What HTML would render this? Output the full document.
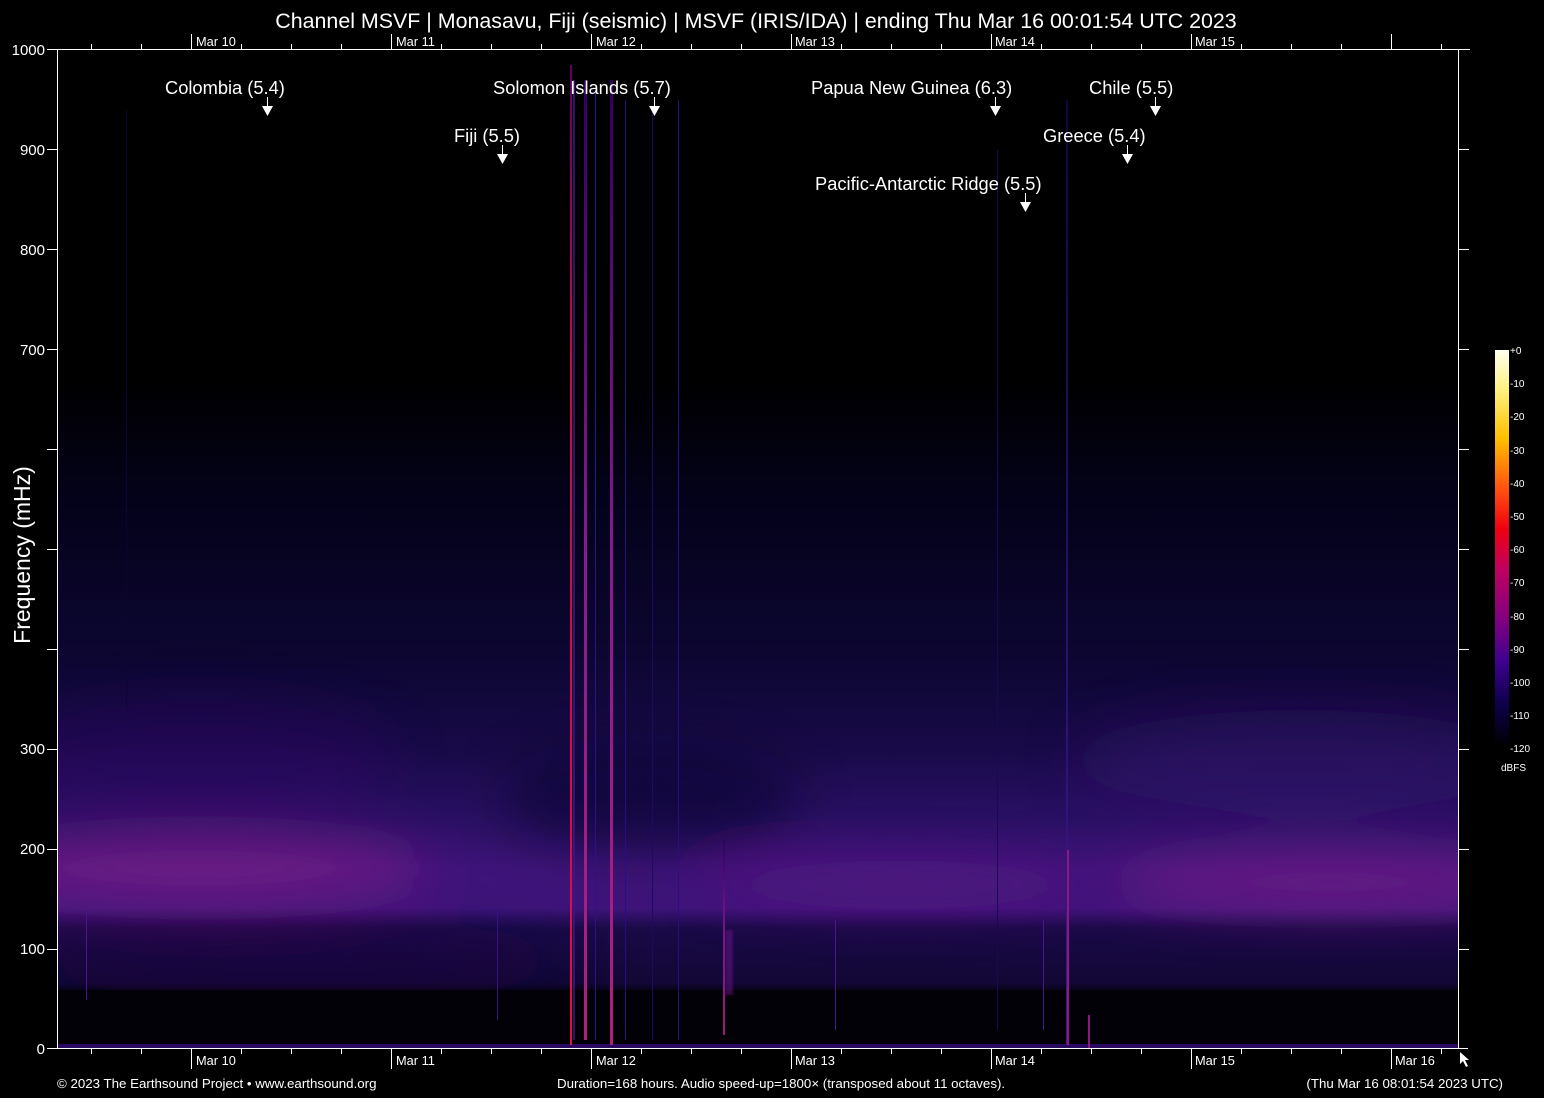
<!DOCTYPE html>
<html><head><meta charset="utf-8"><style>
html,body{margin:0;padding:0;background:#000;width:1544px;height:1098px;overflow:hidden}
svg{display:block}
text{font-family:"Liberation Sans",Arial,sans-serif;fill:#fff}
</style></head><body>
<svg width="1544" height="1098" viewBox="0 0 1544 1098" xmlns="http://www.w3.org/2000/svg">
<defs>
<linearGradient id="bg" x1="0" y1="0" x2="0" y2="1" gradientUnits="objectBoundingBox">
<stop offset="0" stop-color="#000"/>
<stop offset="0.33" stop-color="#000"/>
<stop offset="0.45" stop-color="#04021a"/>
<stop offset="0.6" stop-color="#0c0630"/>
<stop offset="0.7" stop-color="#180a48"/>
<stop offset="0.77" stop-color="#2a1064"/>
<stop offset="0.82" stop-color="#3e147a"/>
<stop offset="0.86" stop-color="#3e147a"/>
<stop offset="0.88" stop-color="#1a0a48"/>
<stop offset="0.935" stop-color="#120735"/>
<stop offset="0.945" stop-color="#04020c"/>
<stop offset="1" stop-color="#020108"/>
</linearGradient>
<clipPath id="pc"><rect x="58" y="50" width="1400" height="998"/></clipPath>
<filter id="bl" x="-50%" y="-50%" width="200%" height="200%"><feGaussianBlur stdDeviation="25"/></filter>
<filter id="bl2" x="-50%" y="-50%" width="200%" height="200%"><feGaussianBlur stdDeviation="1"/></filter>
<linearGradient id="red" x1="0" y1="0" x2="0" y2="1">
<stop offset="0" stop-color="#600060"/><stop offset="0.3" stop-color="#c0104a"/><stop offset="1" stop-color="#e01040"/></linearGradient>
<linearGradient id="mag" x1="0" y1="0" x2="0" y2="1">
<stop offset="0" stop-color="#300060"/><stop offset="0.5" stop-color="#8a1a90"/><stop offset="1" stop-color="#b0207a"/></linearGradient>
<linearGradient id="blu" x1="0" y1="0" x2="0" y2="1">
<stop offset="0" stop-color="#10083a"/><stop offset="1" stop-color="#3a1890"/></linearGradient>
<linearGradient id="cb" x1="0" y1="0" x2="0" y2="1">
<stop offset="0" stop-color="#fffff0"/><stop offset="0.1" stop-color="#fff080"/><stop offset="0.22" stop-color="#ffc000"/><stop offset="0.35" stop-color="#ff5010"/><stop offset="0.45" stop-color="#f00010"/><stop offset="0.55" stop-color="#c00060"/><stop offset="0.68" stop-color="#800080"/><stop offset="0.78" stop-color="#400090"/><stop offset="0.88" stop-color="#100050"/><stop offset="1" stop-color="#000"/></linearGradient>
<pattern id="tk" x="91" y="0" width="50" height="2000" patternUnits="userSpaceOnUse"><rect x="0" y="0" width="1" height="2000" fill="#fff"/></pattern>
<pattern id="tkd" x="191" y="0" width="200" height="2000" patternUnits="userSpaceOnUse"><rect x="0" y="0" width="1" height="2000" fill="#fff"/></pattern>
<pattern id="yt" x="0" y="49" width="20" height="100" patternUnits="userSpaceOnUse"><rect x="0" y="0" width="20" height="1" fill="#fff"/></pattern>
</defs>
<!-- plot -->
<rect x="58" y="50" width="1400" height="998" fill="url(#bg)"/>
<g clip-path="url(#pc)">
<g filter="url(#bl)">
<ellipse cx="200" cy="868" rx="230" ry="35" fill="#9a1f90" opacity="0.5"/>
<ellipse cx="1330" cy="882" rx="220" ry="30" fill="#9a1f90" opacity="0.45"/>
<ellipse cx="900" cy="885" rx="200" ry="25" fill="#7a1a8a" opacity="0.3"/>
<ellipse cx="1300" cy="760" rx="230" ry="50" fill="#4a1688" opacity="0.3"/>
<ellipse cx="200" cy="760" rx="200" ry="60" fill="#3a1278" opacity="0.25"/>
<ellipse cx="650" cy="800" rx="150" ry="50" fill="#0a0425" opacity="0.5"/>
<ellipse cx="300" cy="960" rx="260" ry="22" fill="#1a0a45" opacity="0.6"/>
</g>
</g>
<rect x="58" y="990" width="1400" height="58" fill="#030108"/>
<rect x="58" y="1044" width="1400" height="4" fill="#2a0a60"/>
<!-- quake lines -->
<rect x="570" y="65" width="2" height="980" fill="url(#red)"/>
<rect x="573" y="80" width="2" height="960" fill="#40148a" opacity="0.8"/>
<rect x="584" y="80" width="3" height="960" fill="url(#mag)"/>
<rect x="595" y="90" width="1" height="950" fill="#30108a"/>
<rect x="610" y="80" width="3" height="965" fill="url(#mag)"/>
<rect x="625" y="100" width="1" height="940" fill="#2a0e80"/>
<rect x="652" y="110" width="1" height="930" fill="#1e0a60"/>
<rect x="678" y="100" width="1" height="940" fill="#2a0e80"/>
<rect x="723" y="840" width="2" height="195" fill="url(#mag)" opacity="0.9"/>
<rect x="725" y="930" width="8" height="65" fill="#6a1888" opacity="0.5" filter="url(#bl2)"/>
<rect x="1066" y="100" width="2" height="945" fill="url(#blu)"/>
<rect x="1067" y="850" width="2" height="195" fill="#8a1a80"/>
<rect x="1043" y="920" width="1" height="110" fill="#4a1690"/>
<rect x="835" y="920" width="1" height="110" fill="#4a1690"/>
<rect x="997" y="150" width="1" height="880" fill="#180a50"/>
<rect x="1088" y="1015" width="2" height="33" fill="#8a1a80"/>
<rect x="86" y="910" width="1" height="90" fill="#4a1690"/>
<rect x="126" y="110" width="1" height="600" fill="#0a0630"/>
<rect x="497" y="900" width="1" height="120" fill="#3a1280"/>
<!-- axes -->
<rect x="57" y="49" width="1" height="1000" fill="#fff"/>
<rect x="1458" y="49" width="1" height="1000" fill="#fff"/>
<rect x="57" y="49" width="1413" height="1" fill="#fff"/>
<rect x="47" y="1048" width="1421" height="1" fill="#fff"/>
<rect x="47" y="49" width="10" height="1000" fill="url(#yt)"/>
<rect x="1459" y="49" width="10" height="1000" fill="url(#yt)"/>
<rect x="58" y="44" width="1400" height="5" fill="url(#tk)"/>
<rect x="58" y="34" width="1400" height="15" fill="url(#tkd)"/>
<rect x="58" y="1049" width="1400" height="5" fill="url(#tk)"/>
<rect x="58" y="1049" width="1400" height="20" fill="url(#tkd)"/>
<!-- labels -->
<text x="756" y="28" font-size="21.4" text-anchor="middle">Channel MSVF | Monasavu, Fiji (seismic) | MSVF (IRIS/IDA) | ending Thu Mar 16 00:01:54 UTC 2023</text>
<g font-size="12.8">
<text x="196" y="46">Mar 10</text><text x="396" y="46">Mar 11</text><text x="596" y="46">Mar 12</text><text x="795" y="46">Mar 13</text><text x="995" y="46">Mar 14</text><text x="1195" y="46">Mar 15</text>
<text x="196" y="1065">Mar 10</text><text x="396" y="1065">Mar 11</text><text x="596" y="1065">Mar 12</text><text x="795" y="1065">Mar 13</text><text x="995" y="1065">Mar 14</text><text x="1195" y="1065">Mar 15</text><text x="1395" y="1065">Mar 16</text>
</g>
<g font-size="15" text-anchor="end">
<text x="45" y="55">1000</text><text x="45" y="155">900</text><text x="45" y="255">800</text><text x="45" y="355">700</text>
<text x="45" y="754">300</text><text x="45" y="854">200</text><text x="45" y="954">100</text><text x="45" y="1054">0</text>
</g>
<text transform="translate(30,555) rotate(-90)" font-size="23" text-anchor="middle">Frequency (mHz)</text>
<g font-size="18.3">
<text x="165" y="94">Colombia (5.4)</text>
<text x="493" y="94">Solomon Islands (5.7)</text>
<text x="454" y="142">Fiji (5.5)</text>
<text x="811" y="94">Papua New Guinea (6.3)</text>
<text x="1089" y="94">Chile (5.5)</text>
<text x="1043" y="142">Greece (5.4)</text>
<text x="815" y="190">Pacific-Antarctic Ridge (5.5)</text>
</g>
<g fill="#fff">
<rect x="267" y="97" width="1" height="10"/><polygon points="262,106 273,106 267.5,116"/>
<rect x="654" y="97" width="1" height="10"/><polygon points="649,106 660,106 654.5,116"/>
<rect x="502" y="145" width="1" height="10"/><polygon points="497,154 508,154 502.5,164"/>
<rect x="995" y="97" width="1" height="10"/><polygon points="990,106 1001,106 995.5,116"/>
<rect x="1155" y="97" width="1" height="10"/><polygon points="1150,106 1161,106 1155.5,116"/>
<rect x="1127" y="145" width="1" height="10"/><polygon points="1122,154 1133,154 1127.5,164"/>
<rect x="1025" y="193" width="1" height="10"/><polygon points="1020,202 1031,202 1025.5,212"/>
<polygon points="1460,1052 1460,1064 1463,1061 1466,1067 1468,1066 1465,1060 1469,1060" />
</g>
<!-- colorbar -->
<rect x="1495" y="350" width="14" height="398" fill="url(#cb)"/>
<g font-size="10" fill="#ddd">
<text x="1510" y="354">+0</text><text x="1510" y="387">-10</text><text x="1510" y="420">-20</text><text x="1510" y="454">-30</text><text x="1510" y="487">-40</text><text x="1510" y="520">-50</text><text x="1510" y="553">-60</text><text x="1510" y="586">-70</text><text x="1510" y="620">-80</text><text x="1510" y="653">-90</text><text x="1510" y="686">-100</text><text x="1510" y="719">-110</text><text x="1510" y="752">-120</text>
<text x="1501" y="771">dBFS</text>
</g>
<g font-size="13.3">
<text x="57" y="1088">© 2023 The Earthsound Project • www.earthsound.org</text>
<text x="557" y="1088">Duration=168 hours. Audio speed-up=1800× (transposed about 11 octaves).</text>
<text x="1503" y="1088" text-anchor="end">(Thu Mar 16 08:01:54 2023 UTC)</text>
</g>
</svg>
</body></html>
